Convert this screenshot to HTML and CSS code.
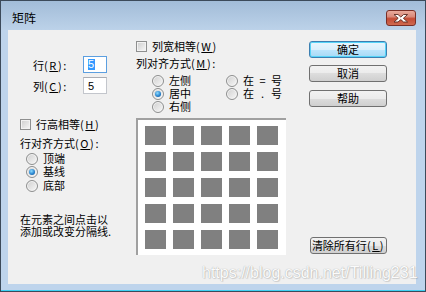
FILE: index.html
```html
<!DOCTYPE html>
<html>
<head>
<meta charset="utf-8">
<link rel="stylesheet" href="styles.css">
</head>
<body>
<div class="window">
  <div class="titlebar">
    <span class="title">矩阵</span>
    <span class="close">
      <svg width="30" height="16" viewBox="0 0 30 16">
        <polygon points="8,4.5 12,4.5 14.8,7 17.6,4.5 21.6,4.5 17.4,8.3 21.6,12 17.6,12 14.8,9.6 12,12 8,12 12.2,8.3" fill="#fff" stroke="#5a2a22" stroke-width="0.9" stroke-linejoin="round"/>
      </svg>
    </span>
  </div>
  <div class="client">
    <div class="col-left">
      <div class="field"><span class="flabel">行<span class="k">(<u>R</u>):</span></span><span class="input focus"><span class="sel">5</span></span></div>
      <div class="field"><span class="flabel">列<span class="k">(<u>C</u>):</span></span><span class="input"><span>5</span></span></div>
      <div class="line chkrow"><span class="chk"></span>行高相等<span class="k">(<u>H</u>)</span></div>
      <div class="line lbl">行对齐方式<span class="k">(<u>O</u>):</span></div>
      <div class="line rrow r1"><span class="radio"></span>顶端</div>
      <div class="line rrow"><span class="radio on"></span>基线</div>
      <div class="line rrow r3"><span class="radio"></span>底部</div>
      <div class="note"><span class="note1">在元素之间点击以</span><br>添加或改变分隔线.</div>
    </div>
    <div class="col-mid">
      <div class="line chkrow-m"><span class="chk"></span>列宽相等<span class="k">(<u>W</u>)</span></div>
      <div class="line lbl-m">列对齐方式<span class="k">(<u>M</u>):</span></div>
      <div class="rgrid">
        <div class="line"><span class="radio"></span>左侧</div>
        <div class="line"><span class="radio"></span><span class="sym">在<i>=</i>号</span></div>
        <div class="line"><span class="radio on"></span>居中</div>
        <div class="line"><span class="radio"></span><span class="sym">在<i>.</i>号</span></div>
        <div class="line"><span class="radio"></span>右侧</div>
      </div>
      <div class="preview">
        <span class="cell"></span><span class="cell"></span><span class="cell"></span><span class="cell"></span><span class="cell"></span>
        <span class="cell"></span><span class="cell"></span><span class="cell"></span><span class="cell"></span><span class="cell"></span>
        <span class="cell"></span><span class="cell"></span><span class="cell"></span><span class="cell"></span><span class="cell"></span>
        <span class="cell"></span><span class="cell"></span><span class="cell"></span><span class="cell"></span><span class="cell"></span>
        <span class="cell"></span><span class="cell"></span><span class="cell"></span><span class="cell"></span><span class="cell"></span>
      </div>
    </div>
    <div class="col-right">
      <div class="btn default">确定</div>
      <div class="btn b2">取消</div>
      <div class="btn b3">帮助</div>
      <div class="btn clear">清除所有行<span class="k">(<u>L</u>)</span></div>
    </div>
  </div>
  <div class="watermark">https://blog.csdn.net/Tilling231</div>
</div>
</body>
</html>
```

FILE: styles.css
```css
html, body {
  margin: 0;
  padding: 0;
  background: #ffffff;
}
body {
  font-family: "Noto Sans CJK SC", "Noto Sans", sans-serif;
  font-size: 11px;
  color: #000;
}
.window {
  position: relative;
  width: 426px;
  height: 292px;
  box-sizing: border-box;
  border: 1px solid #3c4a5a;
  background: #bed4ec;
  box-shadow: inset 0 -1px 0 #3fd0f2;
  display: flex;
  flex-direction: column;
  overflow: hidden;
}
.titlebar {
  height: 29px;
  flex-shrink: 0;
  display: flex;
  align-items: flex-start;
  padding-left: 11px;
  background: linear-gradient(#a2bcd8, #bcd2e9);
}
.title {
  font-size: 12px;
  line-height: 16px;
  margin-top: 9px;
}
.close {
  margin-left: auto;
  margin-right: 9px;
  margin-top: 9px;
  width: 30px;
  height: 16px;
  box-sizing: border-box;
  border: 1px solid #7a2f27;
  border-radius: 3px;
  background: linear-gradient(#e9aa9c 0%, #d98a7b 40%, #c44b35 55%, #cf6a50 100%);
  display: flex;
  align-items: center;
  justify-content: center;
  overflow: hidden;
}
.close svg {
  display: block;
  flex-shrink: 0;
}
.client {
  width: 408px;
  height: 254px;
  margin-left: 7px;
  background: #f0f0f0;
  display: flex;
  flex-shrink: 0;
}
.k {
  letter-spacing: 1.6px;
}
u {
  text-decoration: underline;
  text-underline-offset: 1px;
}
.line {
  height: 13px;
  line-height: 13px;
  display: flex;
  align-items: center;
  white-space: nowrap;
}
.col-left {
  width: 128px;
  flex-shrink: 0;
  padding-top: 26px;
  box-sizing: border-box;
  display: flex;
  flex-direction: column;
}
.field {
  height: 17px;
  display: flex;
  align-items: center;
}
.field + .field {
  margin-top: 4px;
}
.flabel {
  width: 75px;
  padding-left: 25px;
  box-sizing: border-box;
  white-space: nowrap;
}
.input {
  width: 24px;
  height: 17px;
  box-sizing: border-box;
  border: 1px solid #c3c6cc;
  border-top-color: #abadb3;
  background: #fff;
  padding-left: 4px;
  display: flex;
  align-items: center;
  font-family: "Liberation Sans", sans-serif;
  font-size: 11px;
}
.input.focus {
  border-color: #5c9fe0;
}
.sel {
  background: #3399ff;
  color: #fff;
  line-height: 11px;
  padding: 0 1px 0 0;
}
.chk {
  width: 11px;
  height: 11px;
  box-sizing: border-box;
  border: 1px solid #8e8f8f;
  background: linear-gradient(135deg, #cdcdcd, #f7f7f7);
  box-shadow: inset 0 0 0 1px #f2f2f2;
  margin-right: 5px;
  flex-shrink: 0;
}
.radio {
  position: relative;
  width: 12px;
  height: 12px;
  box-sizing: border-box;
  border-radius: 50%;
  border: 1px solid #8e8f8f;
  background: linear-gradient(135deg, #cfcfcf, #f8f8f8);
  box-shadow: inset 0 0 0 1px #f4f4f4;
  margin-right: 5px;
  flex-shrink: 0;
}
.radio.on::after {
  content: "";
  position: absolute;
  left: 2px;
  top: 2px;
  width: 6px;
  height: 6px;
  border-radius: 50%;
  background: radial-gradient(circle at 40% 35%, #8fdcff 0%, #2a86d0 55%, #0c4c8c 100%);
}
.chkrow {
  margin-top: 24px;
  padding-left: 12px;
}
.lbl {
  margin-top: 6px;
  padding-left: 12px;
}
.rrow {
  padding-left: 18px;
}
.r1 {
  margin-top: 2px;
}
.r3 {
  margin-top: 1px;
}
.note {
  margin-top: 21px;
  padding-left: 12px;
  line-height: 12px;
  white-space: nowrap;
}
.col-mid {
  width: 150px;
  flex-shrink: 0;
  padding-top: 10px;
  box-sizing: border-box;
  display: flex;
  flex-direction: column;
}
.lbl-m {
  margin-top: 4px;
}
.rgrid {
  margin-top: 4px;
  padding-left: 16px;
  display: grid;
  grid-template-columns: 74px auto;
  grid-auto-rows: 13px;
}
.sym i {
  display: inline-block;
  width: 17px;
  text-align: center;
  font-style: normal;
}
.preview {
  margin-top: 5px;
  width: 150px;
  height: 137px;
  box-sizing: border-box;
  border-top: 2px solid #a0a0a0;
  border-left: 2px solid #a0a0a0;
  background: #fff;
  padding: 6px 0 0 7px;
  display: grid;
  grid-template-columns: repeat(5, 21px);
  grid-auto-rows: 19px;
  gap: 7px;
  align-content: start;
}
.cell {
  background: #808080;
}
.col-right {
  width: 78px;
  margin-left: 23px;
  flex-shrink: 0;
  padding-top: 11px;
  box-sizing: border-box;
  display: flex;
  flex-direction: column;
}
.btn {
  width: 78px;
  height: 17px;
  box-sizing: border-box;
  border: 1px solid #707070;
  border-radius: 3px;
  background: linear-gradient(#f2f2f2 0%, #ebebeb 50%, #dddddd 50%, #cfcfcf 100%);
  display: flex;
  align-items: center;
  justify-content: center;
  white-space: nowrap;
  line-height: 13px;
}
.btn.default {
  border-color: #3c7fb1;
  background: linear-gradient(#eaf6fd 0%, #d9f0fc 50%, #bee6fd 50%, #a7d9f5 100%);
  box-shadow: inset 0 0 0 1px #56d4f8;
}
.b2 {
  margin-top: 7px;
}
.b3 {
  margin-top: 8px;
}
.btn.clear {
  margin-top: 130px;
  margin-left: 1px;
  width: 77px;
}
.watermark {
  position: absolute;
  left: 201px;
  top: 264px;
  font-family: "Liberation Sans", sans-serif;
  font-size: 16px;
  line-height: 16px;
  color: #fbfbfb;
  text-shadow: 0 0 1px #9a9a9a, 1px 1px 1px rgba(0, 0, 0, 0.12);
  white-space: nowrap;
}
```
